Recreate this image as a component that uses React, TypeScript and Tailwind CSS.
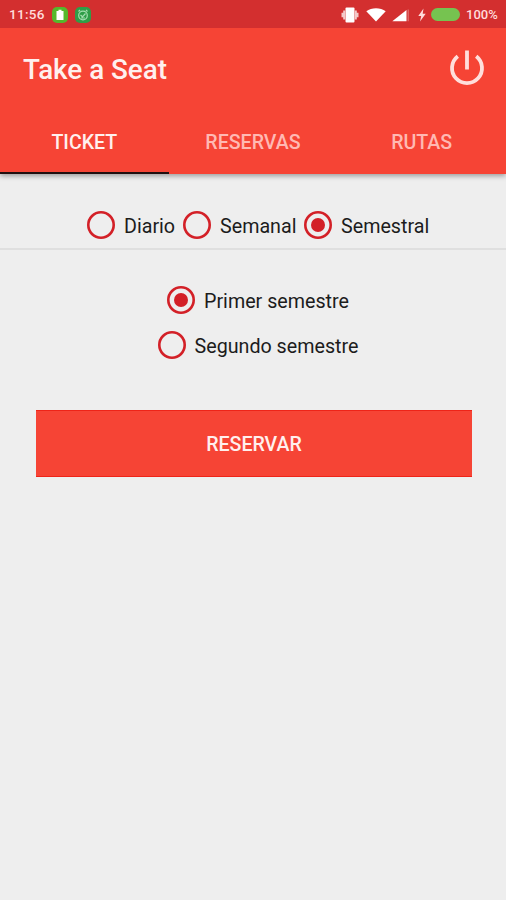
type RadioProps = {
    label: string;
    checked?: boolean;
    width: string;
};

function Radio({ label, checked, width }: RadioProps) {
    return (
        <label className="flex items-center gap-[9px] text-[19.7px] text-[#1c1c1c]">
            <svg viewBox="0 0 28 28" className="size-7 shrink-0">
                <circle
                    cx="14"
                    cy="14"
                    r="12.7"
                    fill="none"
                    stroke="#d32027"
                    strokeWidth="2.6"
                />
                {checked && <circle cx="14" cy="14" r="7" fill="#d32027" />}
            </svg>
            <span className={`${width} whitespace-nowrap pt-1 leading-6`}>
                {label}
            </span>
        </label>
    );
}

function StatusBar() {
    return (
        <div className="flex h-7 items-center bg-[#d32f2f] pl-[9px] pr-2 pt-px text-[#ffdcdc]">
            <span className="w-9 text-[13.5px] font-medium tracking-[0.3px]">
                11:56
            </span>
            <svg viewBox="0 0 16 16" className="ml-[7px] size-4">
                <rect width="16" height="16" rx="5" fill="#55b82c" />
                <path d="M4.500 4h2V2.800h3V4h2v9h-7z" fill="#fff" />
            </svg>
            <svg viewBox="0 0 16 16" className="ml-[7px] size-4">
                <rect width="16" height="16" rx="5" fill="#2f9d47" />
                <g fill="none" stroke="#a4dfb0" strokeWidth="1.2">
                    <circle cx="8" cy="8.500" r="4.300" />
                    <path d="M3.500 4.500 5 3M12.500 4.500 11 3M5.500 8l2 1.800L10.500 6.500M6 11h4" />
                </g>
            </svg>

            <div className="ml-auto flex items-center">
                <svg viewBox="0 0 18 16" className="h-4 w-[18px]" fill="#fff">
                    <rect x="4.500" y="0.500" width="9" height="15" rx="1" />
                    <path
                        d="M2.200 3.500h2v9h-2zM0.500 5.800h2v4.400h-2zM13.800 3.500h2v9h-2zM15.500 5.800h2v4.400h-2z"
                        opacity="0.75"
                    />
                </svg>
                <svg
                    viewBox="0 0 20 14"
                    className="ml-[7px] h-3.5 w-5"
                    fill="#fff"
                >
                    <path d="M10 13.500 0.300 3.300C5.500-0.800 14.500-0.800 19.700 3.300z" />
                </svg>
                <svg
                    viewBox="0 0 18 14"
                    className="ml-[6px] h-3.5 w-[18px]"
                    fill="#fff"
                >
                    <path d="M0.300 13.300 14.500 2v11.300z" />
                    <path d="M15.500 1.500h1.500v11.800h-1.500z" opacity="0.25" />
                </svg>
                <svg
                    viewBox="0 0 8 14"
                    className="ml-[8px] h-3.5 w-2"
                    fill="#ffdcdc"
                >
                    <path d="M5.500 0.500 0.300 8h2.900L2 13.500 7.700 5.800H4.700z" />
                </svg>
                <span className="ml-[5px] h-[13px] w-[29px] rounded-full bg-[#76c350]" />
                <span className="ml-[6px] w-8 whitespace-nowrap text-[13px] font-medium">
                    100%
                </span>
            </div>
        </div>
    );
}

export default function App() {
    return (
        <main className="flex h-[900px] w-[506px] flex-col overflow-hidden bg-[#eeeeee] font-[Roboto,sans-serif]">
            <header className="bg-[#f64435] shadow-[0_2px_5px_rgba(0,0,0,0.35)]">
                <StatusBar />
                <div className="flex h-[82px] items-center justify-between pl-[23px] pr-[21px]">
                    <h1 className="pt-px text-[27.8px] font-medium text-[#fff0ee]">
                        Take a Seat
                    </h1>
                    <svg
                        viewBox="0 0 36 36"
                        className="mb-1 size-9"
                        fill="none"
                        stroke="#ffdfdc"
                        strokeWidth="3.8"
                    >
                        <path d="M18 1.500v19M8.800 7.200a15 15 0 1 0 18.400 0" />
                    </svg>
                </div>
                <nav className="grid h-16 grid-cols-3 text-center text-[19.6px] font-medium leading-[58px]">
                    <span className="border-b-2 border-[#211010] pt-1 text-[#fff0ee]">
                        TICKET
                    </span>
                    <span className="pt-1 text-[#ffb9b3]">RESERVAS</span>
                    <span className="pt-1 text-[#ffb9b3]">RUTAS</span>
                </nav>
            </header>

            <section className="flex h-[76px] items-start justify-center gap-[9px] border-b-2 border-[#dfdfdf] pl-[10px] pt-[37px]">
                <Radio label="Diario" width="w-[50px]" />
                <Radio label="Semanal" width="w-[75px]" />
                <Radio label="Semestral" checked width="w-[88px]" />
            </section>

            <section className="flex flex-col items-center gap-[17px] pl-[10px] pt-9">
                <Radio label="Primer semestre" checked width="w-[145px]" />
                <Radio label="Segundo semestre" width="w-[164px]" />
            </section>

            <button className="ml-9 mr-[34px] mt-[51px] h-[67px] border-y border-[#ee2418] bg-[#f64435] pt-0.5 text-[19.6px] font-medium text-[#fff0ee]">
                RESERVAR
            </button>
        </main>
    );
}
